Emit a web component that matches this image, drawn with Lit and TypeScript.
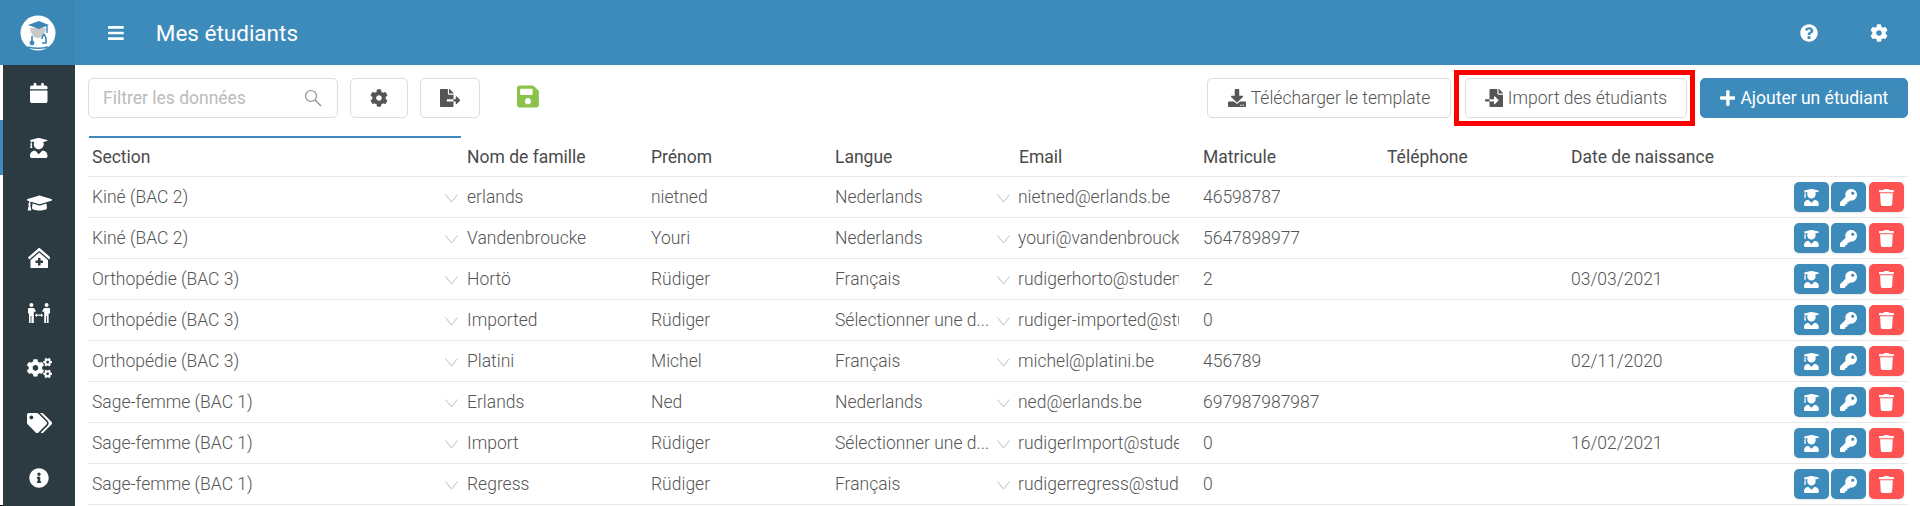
import { LitElement, html, css } from "lit";
import { customElement } from "lit/decorators.js";

const P: Record<string, [string, string]> = {
  calendar: ["0 0 448 512", "M12 192h424c6.6 0 12 5.4 12 12v260c0 26.5-21.5 48-48 48H48c-26.5 0-48-21.5-48-48V204c0-6.6 5.4-12 12-12zm436-44v-36c0-26.5-21.5-48-48-48h-48V12c0-6.6-5.4-12-12-12h-40c-6.6 0-12 5.4-12 12v52H160V12c0-6.6-5.4-12-12-12h-40c-6.6 0-12 5.4-12 12v52H48C21.5 64 0 85.5 0 112v36c0 6.6 5.4 12 12 12h424c6.6 0 12-5.4 12-12z"],
  userGrad: ["0 0 448 512", "M319.4 320.6L224 416l-95.4-95.4C57.1 323.7 0 382.2 0 454.4v9.6c0 26.5 21.5 48 48 48h352c26.5 0 48-21.5 48-48v-9.6c0-72.2-57.1-130.7-128.6-133.8zM13.6 79.8l6.4 1.5v58.4c-7 4.2-12 11.5-12 20.3 0 8.4 4.6 15.4 11.1 19.7L3.5 242c-1.7 6.9 2.1 14 7.6 14h41.8c5.5 0 9.3-7.1 7.6-14l-15.6-62.3C51.4 175.4 56 168.4 56 160c0-8.8-5-16.1-12-20.3V87.1l66 15.9c-8.6 17.2-14 36.4-14 57 0 70.7 57.3 128 128 128s128-57.3 128-128c0-20.6-5.3-39.8-14-57l96.3-23.2c18.2-4.4 18.2-27.1 0-31.5l-190.4-46c-13-3.1-26.7-3.1-39.7 0L13.6 48.2c-18.1 4.4-18.1 27.2 0 31.6z"],
  cap: ["0 0 640 512", "M622.34 153.2L343.4 67.5c-15.2-4.67-31.6-4.67-46.79 0L17.66 153.2c-23.54 7.23-23.54 38.36 0 45.59l48.63 14.94c-10.67 13.19-17.23 29.28-17.88 46.9C38.78 266.15 32 276.11 32 288c0 10.78 5.68 19.85 13.86 25.65L20.33 428.53C18.11 438.52 25.71 448 35.94 448h56.11c10.24 0 17.84-9.48 15.62-19.47L82.14 313.65C90.32 307.85 96 298.78 96 288c0-11.57-6.47-21.25-15.66-26.87.76-15.02 8.44-28.3 20.69-36.72L296.6 284.5c9.06 2.78 26.44 6.25 46.79 0l278.95-85.7c23.55-7.24 23.55-38.36 0-45.6zM352.79 315.09c-28.53 8.76-52.84 3.92-65.59 0l-145.02-44.55L128 384c0 35.35 85.96 64 192 64s192-28.65 192-64l-14.18-113.47-145.03 44.56z"],
  clinic: ["0 0 576 512", "M288 115L69.47 307.71c-1.62 1.46-3.69 2.14-5.47 3.35V496a16 16 0 0 0 16 16h416a16 16 0 0 0 16-16V311.1c-1.7-1.16-3.72-1.82-5.26-3.2zm96 261a8 8 0 0 1-8 8h-56v56a8 8 0 0 1-8 8h-48a8 8 0 0 1-8-8v-56h-56a8 8 0 0 1-8-8v-48a8 8 0 0 1 8-8h56v-56a8 8 0 0 1 8-8h48a8 8 0 0 1 8 8v56h56a8 8 0 0 1 8 8zm186.69-139.72l-255.94-226a39.85 39.85 0 0 0-53.45 0l-256 226a16 16 0 0 0-1.21 22.6L25.5 282.7a16 16 0 0 0 22.6 1.21L277.42 81.63a16 16 0 0 1 21.17 0L527.91 283.9a16 16 0 0 0 22.6-1.21l21.4-23.82a16 16 0 0 0-1.22-22.59z"],
  people: ["0 0 220 200", "M34 0a20 20 0 1 1 0 40a20 20 0 1 1 0-40zM186 0a20 20 0 1 1 0 40a20 20 0 1 1 0-40zM8 50h44q8 0 13 8l14 24-14 10-7-12v120H34v-70h-8v70H10v-90L0 100V60q0-10 8-10zM212 50h-44q-8 0-13 8l-14 24 14 10 7-12v120h20v-70h8v70h16v-90l14-10V60q0-10-8-10zM68 122l22-18v12h40v-12l22 18-22 18v-12H90v12z"],
  cogs: ["0 0 640 512", "M512.1 191l-8.2 14.3c-3 5.3-9.4 7.5-15.1 5.4-11.8-4.4-22.6-10.7-32.1-18.6-4.6-3.8-5.8-10.5-2.8-15.7l8.2-14.3c-6.9-8-12.3-17.3-15.9-27.4h-16.5c-6 0-11.2-4.3-12.2-10.3-2-12-2.1-24.6 0-37.1 1-6 6.2-10.4 12.2-10.4h16.5c3.6-10.1 9-19.4 15.9-27.4l-8.2-14.3c-3-5.2-1.9-11.9 2.8-15.7 9.5-7.9 20.4-14.2 32.1-18.6 5.7-2.1 12.1.1 15.1 5.4l8.2 14.3c10.5-1.9 21.2-1.9 31.7 0L552 6.3c3-5.3 9.4-7.5 15.1-5.4 11.8 4.4 22.6 10.7 32.1 18.6 4.6 3.8 5.8 10.5 2.8 15.7l-8.2 14.3c6.9 8 12.3 17.3 15.9 27.4h16.5c6 0 11.2 4.3 12.2 10.3 2 12 2.1 24.6 0 37.1-1 6-6.2 10.4-12.2 10.4h-16.5c-3.6 10.1-9 19.4-15.9 27.4l8.2 14.3c3 5.2 1.9 11.9-2.8 15.7-9.5 7.9-20.4 14.2-32.1 18.6-5.7 2.1-12.1-.1-15.1-5.4l-8.2-14.3c-10.4 1.9-21.2 1.9-31.7 0zm-10.5-58.8c38.5 29.6 82.4-14.3 52.8-52.8-38.5-29.7-82.4 14.3-52.8 52.8zM386.3 286.1l33.7 16.8c10.1 5.8 14.5 18.1 10.5 29.1-8.9 24.2-26.4 46.4-42.6 65.8-7.4 8.9-20.2 11.1-30.3 5.3l-29.1-16.8c-16 13.7-34.6 24.6-54.9 31.7v33.6c0 11.6-8.3 21.6-19.7 23.6-24.6 4.2-50.4 4.4-75.9 0-11.5-2-20-11.9-20-23.6V418c-20.3-7.2-38.9-18-54.9-31.7L74 403c-10 5.8-22.9 3.6-30.3-5.3-16.2-19.4-33.3-41.6-42.2-65.7-4-10.9.4-23.2 10.5-29.1l33.3-16.8c-3.9-20.9-3.9-42.4 0-63.4L12 205.8c-10.1-5.8-14.6-18.1-10.5-29 8.9-24.2 26-46.4 42.2-65.8 7.4-8.9 20.2-11.1 30.3-5.3l29.1 16.8c16-13.7 34.6-24.6 54.9-31.7V57.1c0-11.5 8.2-21.5 19.6-23.5 24.6-4.2 50.5-4.4 76-.1 11.5 2 20 11.9 20 23.6v33.6c20.3 7.2 38.9 18 54.9 31.7l29.1-16.8c10-5.8 22.9-3.6 30.3 5.3 16.2 19.4 33.2 41.6 42.1 65.8 4 10.9.1 23.2-10 29.1l-33.7 16.8c3.9 21 3.9 42.5 0 63.5zm-117.6 21.1c59.2-77-28.7-164.9-105.7-105.7-59.2 77 28.7 164.9 105.7 105.7zm243.4 182.7l-8.2 14.3c-3 5.3-9.4 7.5-15.1 5.4-11.8-4.4-22.6-10.7-32.1-18.6-4.6-3.8-5.8-10.5-2.8-15.7l8.2-14.3c-6.9-8-12.3-17.3-15.9-27.4h-16.5c-6 0-11.2-4.3-12.2-10.3-2-12-2.1-24.6 0-37.1 1-6 6.2-10.4 12.2-10.4h16.5c3.6-10.1 9-19.4 15.9-27.4l-8.2-14.3c-3-5.2-1.9-11.9 2.8-15.7 9.5-7.9 20.4-14.2 32.1-18.6 5.7-2.1 12.1.1 15.1 5.4l8.2 14.3c10.5-1.9 21.2-1.9 31.7 0l8.2-14.3c3-5.3 9.4-7.5 15.1-5.4 11.8 4.4 22.6 10.7 32.1 18.6 4.6 3.8 5.8 10.5 2.8 15.7l-8.2 14.3c6.9 8 12.3 17.3 15.9 27.4h16.5c6 0 11.2 4.3 12.2 10.3 2 12 2.1 24.6 0 37.1-1 6-6.2 10.4-12.2 10.4h-16.5c-3.6 10.1-9 19.4-15.9 27.4l8.2 14.3c3 5.2 1.9 11.9-2.8 15.7-9.5 7.9-20.4 14.2-32.1 18.6-5.7 2.1-12.1-.1-15.1-5.4l-8.2-14.3c-10.4 1.9-21.2 1.9-31.7 0zM501.6 431c38.5 29.6 82.4-14.3 52.8-52.8-38.5-29.6-82.4 14.3-52.8 52.8z"],
  tags: ["0 0 640 512", "M497.941 225.941L286.059 14.059A48 48 0 0 0 252.118 0H48C21.49 0 0 21.49 0 48v204.118a48 48 0 0 0 14.059 33.941l211.882 211.882c18.744 18.745 49.136 18.746 67.882 0l204.118-204.118c18.745-18.745 18.745-49.137 0-67.882zM112 160c-26.51 0-48-21.49-48-48s21.49-48 48-48 48 21.49 48 48-21.49 48-48 48zm513.941 133.823L421.823 497.941c-18.745 18.745-49.137 18.745-67.882 0l-.36-.36L527.64 323.522c16.999-16.999 26.36-39.6 26.36-63.64s-9.362-46.641-26.36-63.64L331.397 0h48.721a48 48 0 0 1 33.941 14.059l211.882 211.882c18.745 18.745 18.745 49.137 0 67.882z"],
  info: ["0 0 512 512", "M256 8C119.043 8 8 119.083 8 256c0 136.997 111.043 248 248 248s248-111.003 248-248C504 119.083 392.957 8 256 8zm0 110c23.196 0 42 18.804 42 42s-18.804 42-42 42-42-18.804-42-42 18.804-42 42-42zm56 254c0 6.627-5.373 12-12 12h-88c-6.627 0-12-5.373-12-12v-24c0-6.627 5.373-12 12-12h12v-64h-12c-6.627 0-12-5.373-12-12v-24c0-6.627 5.373-12 12-12h64c6.627 0 12 5.373 12 12v100h12c6.627 0 12 5.373 12 12v24z"],
  question: ["0 0 512 512", "M504 256c0 136.997-111.043 248-248 248S8 392.997 8 256C8 119.083 119.043 8 256 8s248 111.083 248 248zM262.655 90c-54.497 0-89.255 22.957-116.549 63.758-3.536 5.286-2.353 12.415 2.715 16.258l34.699 26.31c5.205 3.947 12.621 3.008 16.665-2.122 17.864-22.658 30.113-35.797 57.303-35.797 20.429 0 45.698 13.148 45.698 32.958 0 14.976-12.363 22.667-32.534 33.976C247.128 238.528 216 254.941 216 296v4c0 6.627 5.373 12 12 12h56c6.627 0 12-5.373 12-12v-1.333c0-28.462 83.186-29.647 83.186-106.667 0-58.002-60.165-102-116.531-102zM256 338c-25.365 0-46 20.635-46 46 0 25.364 20.635 46 46 46s46-20.636 46-46c0-25.365-20.635-46-46-46z"],
  cog: ["0 0 512 512", "M487.4 315.7l-42.6-24.6c4.3-23.2 4.3-47 0-70.2l42.6-24.6c4.9-2.8 7.1-8.6 5.5-14-11.1-35.6-30-67.8-54.7-94.6-3.8-4.1-10-5.1-14.8-2.3L380.8 110c-17.9-15.4-38.5-27.3-60.8-35.1V25.8c0-5.6-3.9-10.5-9.4-11.7-36.7-8.2-74.3-7.8-109.2 0-5.5 1.2-9.4 6.1-9.4 11.7V75c-22.2 7.9-42.8 19.8-60.8 35.1L88.7 85.5c-4.9-2.8-11-1.9-14.8 2.3-24.7 26.7-43.6 58.9-54.7 94.6-1.7 5.4.6 11.2 5.5 14L67.3 221c-4.3 23.2-4.3 47 0 70.2l-42.6 24.6c-4.9 2.8-7.1 8.6-5.5 14 11.1 35.6 30 67.8 54.7 94.6 3.8 4.1 10 5.1 14.8 2.3l42.6-24.6c17.9 15.4 38.5 27.3 60.8 35.1v49.2c0 5.6 3.9 10.5 9.4 11.7 36.7 8.2 74.3 7.8 109.2 0 5.5-1.2 9.4-6.1 9.4-11.7v-49.2c22.2-7.9 42.8-19.8 60.8-35.1l42.6 24.6c4.9 2.8 11 1.9 14.8-2.3 24.7-26.7 43.6-58.9 54.7-94.6 1.5-5.5-.7-11.3-5.6-14.1zM256 336c-44.1 0-80-35.9-80-80s35.9-80 80-80 80 35.9 80 80-35.9 80-80 80z"],
  bars: ["0 0 448 512", "M16 132h416c8.837 0 16-7.163 16-16V76c0-8.837-7.163-16-16-16H16C7.163 60 0 67.163 0 76v40c0 8.837 7.163 16 16 16zm0 160h416c8.837 0 16-7.163 16-16v-40c0-8.837-7.163-16-16-16H16c-8.837 0-16 7.163-16 16v40c0 8.837 7.163 16 16 16zm0 160h416c8.837 0 16-7.163 16-16v-40c0-8.837-7.163-16-16-16H16c-8.837 0-16 7.163-16 16v40c0 8.837 7.163 16 16 16z"],
  fileExport: ["0 0 576 512", "M384 121.9c0-6.3-2.5-12.4-7-16.9L279.1 7c-4.5-4.5-10.6-7-17-7H256v128h128zM571 308l-95.7-96.4c-10.1-10.1-27.4-3-27.4 11.3V288h-64v64h64v65.2c0 14.3 17.3 21.4 27.4 11.3L571 332c6.6-6.6 6.6-17.4 0-24zm-379 28v-32c0-8.8 7.2-16 16-16h176V160H248c-13.2 0-24-10.8-24-24V0H24C10.7 0 0 10.7 0 24v464c0 13.3 10.7 24 24 24h336c13.3 0 24-10.7 24-24V352H208c-8.8 0-16-7.2-16-16z"],
  fileImport: ["0 0 512 512", "M16 288c-8.8 0-16 7.2-16 16v32c0 8.8 7.2 16 16 16h112v-64zm489-183L407.1 7c-4.5-4.5-10.6-7-17-7H384v128h128v-6.1c0-6.3-2.5-12.4-7-16.9zm-153 31V0H152c-13.3 0-24 10.7-24 24v264h128v-65.2c0-14.3 17.3-21.4 27.4-11.3L379 308c6.6 6.7 6.6 17.4 0 24l-95.7 96.4c-10.1 10.1-27.4 3-27.4-11.3V352H128v136c0 13.3 10.7 24 24 24h336c13.3 0 24-10.7 24-24V160H376c-13.2 0-24-10.8-24-24z"],
  download: ["0 0 512 512", "M216 0h80c13.3 0 24 10.7 24 24v168h87.7c17.8 0 26.7 21.5 14.1 34.1L269.7 378.3c-7.5 7.5-19.8 7.5-27.3 0L90.1 226.1c-12.6-12.6-3.7-34.1 14.1-34.1H192V24c0-13.3 10.7-24 24-24zm296 376v112c0 13.3-10.7 24-24 24H24c-13.3 0-24-10.7-24-24V376c0-13.3 10.7-24 24-24h146.7l49 49c20.1 20.1 52.5 20.1 72.6 0l49-49H488c13.3 0 24 10.7 24 24zm-124 88c0-11-9-20-20-20s-20 9-20 20 9 20 20 20 20-9 20-20zm64 0c0-11-9-20-20-20s-20 9-20 20 9 20 20 20 20-9 20-20z"],
  plus: ["0 0 448 512", "M416 208H272V64c0-17.67-14.33-32-32-32h-32c-17.67 0-32 14.33-32 32v144H32c-17.67 0-32 14.33-32 32v32c0 17.67 14.33 32 32 32h144v144c0 17.67 14.33 32 32 32h32c17.67 0 32-14.33 32-32V304h144c17.67 0 32-14.33 32-32v-32c0-17.67-14.33-32-32-32z"],
  save: ["0 0 448 512", "M433.941 129.941l-83.882-83.882A48 48 0 0 0 316.118 32H48C21.49 32 0 53.49 0 80v352c0 26.51 21.49 48 48 48h352c26.51 0 48-21.49 48-48V163.882a48 48 0 0 0-14.059-33.941zM224 416c-35.346 0-64-28.654-64-64 0-35.346 28.654-64 64-64s64 28.654 64 64c0 35.346-28.654 64-64 64zm96-304.52V212c0 6.627-5.373 12-12 12H76c-6.627 0-12-5.373-12-12V108c0-6.627 5.373-12 12-12h228.52c3.183 0 6.235 1.264 8.485 3.515l3.48 3.48A11.996 11.996 0 0 1 320 111.48z"],
  key: ["0 0 512 512", "M512 176.001C512 273.203 433.202 352 336 352c-11.22 0-22.19-1.062-32.827-3.069l-24.012 27.014A23.999 23.999 0 0 1 261.223 384H224v40c0 13.255-10.745 24-24 24h-40v40c0 13.255-10.745 24-24 24H24c-13.255 0-24-10.745-24-24v-78.059c0-6.365 2.529-12.47 7.029-16.971l161.802-161.802C163.108 213.814 160 195.271 160 176 160 78.798 238.797.001 335.999 0 433.488-.001 512 78.511 512 176.001zM336 128c0 26.51 21.49 48 48 48s48-21.49 48-48-21.49-48-48-48-48 21.49-48 48z"],
  trash: ["0 0 448 512", "M432 32H312l-9.4-18.7A24 24 0 0 0 281.1 0H166.8a23.72 23.72 0 0 0-21.4 13.3L136 32H16A16 16 0 0 0 0 48v32a16 16 0 0 0 16 16h416a16 16 0 0 0 16-16V48a16 16 0 0 0-16-16zM53.2 467a48 48 0 0 0 47.9 45h245.8a48 48 0 0 0 47.9-45L416 128H32z"],
};

const ic = (n: string) => html`<svg class="ic" viewBox=${P[n][0]} fill="currentColor"><path d=${P[n][1]}></path></svg>`;

const chev = html`<svg class="chev" viewBox="0 0 13 9" fill="none" stroke="#bdbdbd" stroke-width="1"><path d="M.5.5l6 7.5 6-7.5"></path></svg>`;

type Row = { s: string; n: string; p: string; l: string; e: string; m: string; d: string };
const ROWS: Row[] = [
  { s: "Kiné (BAC 2)", n: "erlands", p: "nietned", l: "Nederlands", e: "nietned@erlands.be", m: "46598787", d: "" },
  { s: "Kiné (BAC 2)", n: "Vandenbroucke", p: "Youri", l: "Nederlands", e: "youri@vandenbroucke.be", m: "5647898977", d: "" },
  { s: "Orthopédie (BAC 3)", n: "Hortö", p: "Rüdiger", l: "Français", e: "rudigerhorto@student.be", m: "2", d: "03/03/2021" },
  { s: "Orthopédie (BAC 3)", n: "Imported", p: "Rüdiger", l: "Sélectionner une d...", e: "rudiger-imported@student.be", m: "0", d: "" },
  { s: "Orthopédie (BAC 3)", n: "Platini", p: "Michel", l: "Français", e: "michel@platini.be", m: "456789", d: "02/11/2020" },
  { s: "Sage-femme (BAC 1)", n: "Erlands", p: "Ned", l: "Nederlands", e: "ned@erlands.be", m: "697987987987", d: "" },
  { s: "Sage-femme (BAC 1)", n: "Import", p: "Rüdiger", l: "Sélectionner une d...", e: "rudigerImport@student.be", m: "0", d: "16/02/2021" },
  { s: "Sage-femme (BAC 1)", n: "Regress", p: "Rüdiger", l: "Français", e: "rudigerregress@student.be", m: "0", d: "" },
];

const NAV = ["calendar", "userGrad", "cap", "clinic", "people", "cogs", "tags", "info"];

@customElement("app-root")
export class AppRoot extends LitElement {
  static styles = css`
    :host { display: block; height: 506px; overflow: hidden; font-family: Roboto, sans-serif; color: #555; font-size: 17.5px; background: #fff; }
    * { box-sizing: border-box; }
    .ic { display: block; width: auto; height: 1em; flex: none; }
    .top { display: flex; height: 65px; background: #3d8bbb; color: #fff; align-items: center; }
    .logo { width: 75px; height: 65px; background: #3a86b5; display: flex; align-items: center; justify-content: center; flex: none; }
    .logo svg { display: block; width: 36px; height: 36px; }
    .bars { font-size: 18px; margin-left: 33px; }
    .title { font-size: 22.5px; margin-left: 32px; flex: 1; }
    .tic { font-size: 18px; margin-right: 32px; }
    .tic.q { margin-right: 52px; }
    .main { display: flex; height: 441px; }
    .side { width: 75px; flex: none; display: flex; background: #2c3a42; }
    .stripe { width: 3px; flex: none; display: flex; flex-direction: column; }
    .stripe .a { height: 55px; background: #fff; }
    .stripe .b { height: 55px; background: #3d8bbb; }
    .stripe .c { height: 330px; background: #fff; }
    .stripe .d { height: 1px; background: #000; }
    .nav { flex: 1; }
    .nav div { height: 55px; display: flex; align-items: center; justify-content: center; color: #fff; font-size: 20px; }
    .content { flex: 1; padding: 13px 12px 0 13px; min-width: 0; }
    .tools { display: flex; align-items: center; height: 40px; }
    .search { width: 250px; height: 40px; border: 1px solid #ddd; border-radius: 5px; display: flex; align-items: center; justify-content: space-between; padding: 0 15px 0 14px; color: #bbb; font-weight: 400; }
    .search svg { display: block; width: 18px; height: 18px; }
    .btn { height: 40px; border: 1px solid #ddd; border-radius: 5px; background: #fff; display: flex; align-items: center; justify-content: center; gap: 5px; color: #555; font-weight: 300; }
    .btn .ic { font-size: 18px; }
    .btn.gear { width: 58px; margin-left: 12px; }
    .btn.exp { width: 60px; margin-left: 12px; }
    .saveic { color: #8bc34a; font-size: 25px; margin: 0 auto 3px 37px; }
    .btn.dl { width: 244px; }
    .wrap { position: relative; margin-left: 14px; }
    .btn.imp { width: 222px; }
    .mark { position: absolute; left: -11px; right: -8px; top: -8px; bottom: -8px; border: 5px solid #f00; pointer-events: none; }
    .btn.add { width: 208px; margin-left: 13px; background: #3d8bbb; border-color: #3d8bbb; color: #fff; font-weight: 400; }
    .row { display: grid; grid-template-columns: 375px repeat(7, 184px) 1fr; height: 41px; border-bottom: 1px solid #e8e8e8; align-items: center; font-weight: 300; }
    .head { margin-top: 18px; font-weight: 400; color: #4a4a4a; }
    .th { padding: 1px 0 0 4px; white-space: nowrap; align-self: stretch; display: flex; align-items: center; }
    .th.first { padding-top: 0; margin: 0 2px 0 1px; border-top: 2px solid #3d8bbb; padding-left: 3px; padding-bottom: 1px; }
    .td { padding-left: 4px; white-space: nowrap; min-width: 0; }
    .sel { display: flex; align-items: center; justify-content: space-between; padding-right: 5px; }
    .chev { display: block; width: 13px; height: 9px; flex: none; margin-top: 3px; }
    .clip { overflow: hidden; padding-left: 3px; width: 164px; }
    .acts { display: flex; justify-content: flex-end; gap: 2px; padding-right: 4px; }
    .act { width: 35px; height: 30px; border-radius: 5px; background: #3d8bbb; color: #fff; display: flex; align-items: center; justify-content: center; font-size: 17px; box-shadow: 0 1px 2px rgba(0,0,0,.1); }
    .act.del { background: #ff5252; margin-left: 1px; }
  `;

  render() {
    return html`
      <div class="top">
        <div class="logo">
          <svg viewBox="0 0 36 36">
            <circle cx="18" cy="18" r="17.5" fill="#fff"></circle>
            <path d="M10 13c1 7 4 10 8 10s7-3 8-10z" fill="#c9c9c9"></path>
            <path d="M8 10l11-4 10 4-10 4z" fill="#3a86b5"></path>
            <path d="M27 10v8" stroke="#3a86b5" stroke-width="1.4"></path>
            <path d="M12 21v6M24 19c1 2 2 3 2 5v4h-4M24 19c-1 2-2 3-2 5" fill="none" stroke="#3a86b5" stroke-width="1.6"></path>
            <circle cx="12" cy="28" r="2.4" fill="#3a86b5"></circle>
            <path d="M8 32c6 1.5 14 1.5 20 0" fill="none" stroke="#3a86b5" stroke-width="1.4"></path>
          </svg>
        </div>
        <div class="bars">${ic("bars")}</div>
        <div class="title">Mes étudiants</div>
        <div class="tic q">${ic("question")}</div>
        <div class="tic">${ic("cog")}</div>
      </div>
      <div class="main">
        <div class="side">
          <div class="stripe"><div class="a"></div><div class="b"></div><div class="c"></div><div class="d"></div></div>
          <div class="nav">${NAV.map((n) => html`<div>${ic(n)}</div>`)}</div>
        </div>
        <div class="content">
          <div class="tools">
            <div class="search">
              <span>Filtrer les données</span>
              <svg viewBox="0 0 18 18" fill="none" stroke="#8c8c8c" stroke-width="1.2"><circle cx="7" cy="7" r="5.5"></circle><path d="M11 11l6 6"></path></svg>
            </div>
            <div class="btn gear">${ic("cog")}</div>
            <div class="btn exp">${ic("fileExport")}</div>
            <div class="saveic">${ic("save")}</div>
            <div class="btn dl">${ic("download")}<span>Télécharger le template</span></div>
            <div class="wrap">
              <div class="btn imp">${ic("fileImport")}<span>Import des étudiants</span></div>
              <div class="mark"></div>
            </div>
            <div class="btn add">${ic("plus")}<span>Ajouter un étudiant</span></div>
          </div>
          <div class="row head">
            <div class="th first">Section</div>
            <div class="th">Nom de famille</div>
            <div class="th">Prénom</div>
            <div class="th">Langue</div>
            <div class="th">Email</div>
            <div class="th">Matricule</div>
            <div class="th">Téléphone</div>
            <div class="th">Date de naissance</div>
          </div>
          ${ROWS.map((r) => html`
            <div class="row">
              <div class="td sel"><span>${r.s}</span>${chev}</div>
              <div class="td">${r.n}</div>
              <div class="td">${r.p}</div>
              <div class="td sel"><span>${r.l}</span>${chev}</div>
              <div class="td clip">${r.e}</div>
              <div class="td">${r.m}</div>
              <div class="td"></div>
              <div class="td">${r.d}</div>
              <div class="acts">
                <div class="act">${ic("userGrad")}</div>
                <div class="act">${ic("key")}</div>
                <div class="act del">${ic("trash")}</div>
              </div>
            </div>`)}
        </div>
      </div>
    `;
  }
}
